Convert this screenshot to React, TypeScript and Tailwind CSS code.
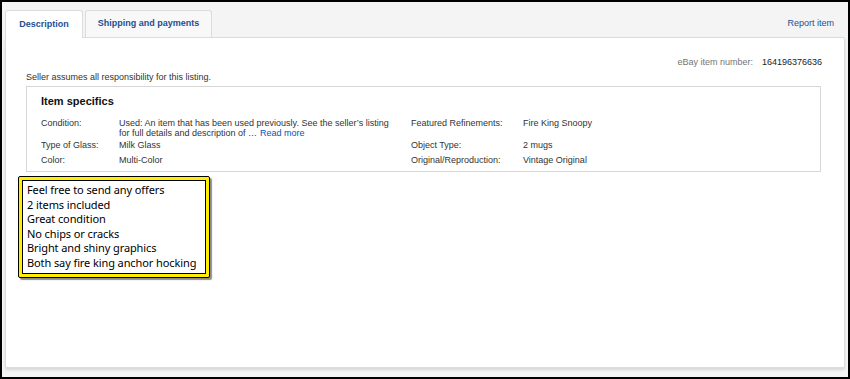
import React from 'react';

const specsLeft = [
  { label: 'Condition:', value: 'cond' },
  { label: 'Type of Glass:', value: 'Milk Glass' },
  { label: 'Color:', value: 'Multi-Color' },
];

const specsRight = [
  { label: 'Featured Refinements:', value: 'Fire King Snoopy' },
  { label: 'Object Type:', value: '2 mugs' },
  { label: 'Original/Reproduction:', value: 'Vintage Original' },
];

const notes = [
  'Feel free to send any offers',
  '2 items included',
  'Great condition',
  'No chips or cracks',
  'Bright and shiny graphics',
  'Both say fire king anchor hocking',
];

const ItemSpecifics: React.FC = () => (
  <div className="ml-[8px] mr-[1px] h-[86px] border border-[#d6d6d6] pl-[14px] pt-[7px]">
    <h3 className="text-[11px] font-bold leading-[14px] text-[#111]">Item specifics</h3>
    <div className="mt-[10px] grid grid-cols-[78px_292px_112px_1fr] text-[9px] leading-[10px] text-[#333]">
      <div className="h-[22px]">{specsLeft[0].label}</div>
      <div className="pr-[22px]">
        Used: An item that has been used previously. See the seller&rsquo;s listing for full details and
        description of &hellip;<span className="ml-[3px] text-[#0654ba]">Read more</span>
      </div>
      <div>{specsRight[0].label}</div>
      <div>{specsRight[0].value}</div>
      {[1, 2].map((i) => (
        <React.Fragment key={i}>
          <div className="h-[15px]">{specsLeft[i].label}</div>
          <div>{specsLeft[i].value}</div>
          <div>{specsRight[i].label}</div>
          <div>{specsRight[i].value}</div>
        </React.Fragment>
      ))}
    </div>
  </div>
);

export default function App() {
  return (
    <div
      className="w-[850px] h-[379px] overflow-hidden border-2 border-black bg-[#f4f4f4] pl-[3px] pr-[3px] pt-[8px]"
      style={{ fontFamily: '"Liberation Sans", Arial, sans-serif' }}
    >
      {/* tab strip */}
      <div className="flex h-[27px] items-end">
        <div className="relative z-10 -mb-px flex h-[28px] w-[78px] items-center justify-center rounded-t-[3px] border border-b-0 border-[#dcdcdc] bg-white text-[9px] font-bold text-[#1d4f91]">
          Description
        </div>
        <div className="ml-[2px] flex h-[27px] w-[127px] items-center justify-center rounded-t-[3px] border border-b-0 border-[#dcdcdc] bg-[#f8f8f8] text-[9px] font-bold text-[#1d4f91]">
          Shipping and payments
        </div>
        <div className="flex-1 self-center pr-[11px] text-right text-[9px] text-[#1d4f91]">Report item</div>
      </div>

      {/* main panel */}
      <div className="h-[331px] rounded-[2px] border border-[#dcdcdc] bg-white pl-[12px] pr-[22px] pt-[18px] shadow-[0_2px_3px_rgba(0,0,0,0.12)]">
        <div className="flex justify-end text-[9px] leading-[12px]">
          <span className="text-[#767676]">eBay item number:</span>
          <span className="ml-[9px] text-[#222]">164196376636</span>
        </div>
        <p className="ml-[8px] mt-[3px] text-[9px] leading-[12px] text-[#333]">
          Seller assumes all responsibility for this listing.
        </p>
        <div className="mt-[3px]">
          <ItemSpecifics />
        </div>

        {/* seller description box */}
        <div className="mt-[4px] w-[192px] rounded-[2px] border border-black bg-[#ffef00] p-[3px] shadow-[2px_2px_1px_rgba(0,0,0,0.45)]">
          <div
            className="whitespace-nowrap border border-black bg-white px-[4px] py-[2px] text-[11px] leading-[14.6px] tracking-[-0.1px] text-black"
            style={{ fontFamily: '"Noto Sans", sans-serif' }}
          >
            {notes.map((n) => (
              <div key={n}>{n}</div>
            ))}
          </div>
        </div>
      </div>
    </div>
  );
}
